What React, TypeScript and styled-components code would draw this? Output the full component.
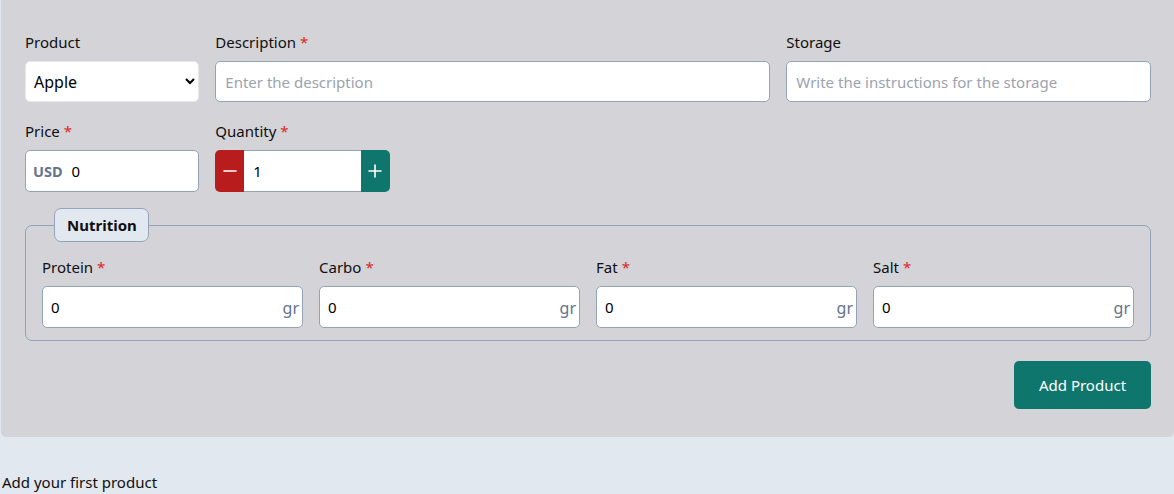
import React from "react";
import styled, { createGlobalStyle } from "styled-components";

const Global = createGlobalStyle`
  html, body { margin: 0; padding: 0; background: #e2e8f0; }
  body { font-family: "Noto Sans", "Open Sans", sans-serif; font-size: 15px; color: #0f0f0f; }
  * { box-sizing: border-box; }
`;

const Page = styled.div`
  padding: 0 0 0 1px;
`;

const Panel = styled.form`
  background: #d4d4d8;
  border-radius: 0 0 5px 5px;
  padding: 30px 23px 28px 24px;
  display: flex;
  flex-direction: column;
`;

const Grid = styled.div`
  display: grid;
  grid-template-columns: repeat(12, 1fr);
  column-gap: 16px;
  row-gap: 17px;
`;

const Field = styled.div<{ $span: number; $start?: number }>`
  grid-column: ${(p) => (p.$start ? `${p.$start} / ` : "")}span ${(p) => p.$span};
  display: flex;
  flex-direction: column;
  min-width: 0;
`;

const Label = styled.label`
  line-height: 24px;
  margin-bottom: 7px;
  font-size: 15px;
`;

const Req = styled.span`
  color: #dc2626;
  margin-left: 4px;
`;

const Select = styled.select`
  height: 41px;
  border: 1px solid #e5e7eb;
  border-radius: 5px;
  background: #fff;
  font: inherit;
  font-size: 16px;
  padding: 0 6px 0 4px;
  color: #000;
`;

const TextInput = styled.input`
  height: 41px;
  border: 1px solid #94a3b8;
  border-radius: 5px;
  background: #fff;
  font: inherit;
  padding: 0 9px;
  color: #000;
  &::placeholder { color: #9ca3af; }
`;

const Group = styled.div`
  height: 42px;
  display: flex;
  align-items: center;
  border: 1px solid #94a3b8;
  border-radius: 5px;
  background: #fff;
  overflow: hidden;
`;

const Addon = styled.span<{ $bold?: boolean }>`
  color: #64748b;
  font-weight: ${(p) => (p.$bold ? 700 : 400)};
  padding: ${(p) => (p.$bold ? "0 1px 0 7px" : "2px 3px 0 0")};
  font-size: ${(p) => (p.$bold ? "14.5px" : "16px")};
`;

const BareInput = styled.input`
  flex: 1;
  min-width: 0;
  border: none;
  outline: none;
  font: inherit;
  height: 100%;
  padding: 0 8px;
  background: transparent;
  color: #000;
`;

const Stepper = styled.div`
  height: 42px;
  display: flex;
  border-radius: 5px;
  overflow: hidden;
`;

const StepBtn = styled.button<{ $tone: "minus" | "plus" }>`
  width: 29px;
  border: none;
  background: ${(p) => (p.$tone === "minus" ? "#b91c1c" : "#0f766e")};
  display: flex;
  align-items: center;
  justify-content: center;
  padding: 0;
`;

const StepInput = styled.input`
  flex: 1;
  min-width: 0;
  border: 1px solid #94a3b8;
  border-left: none;
  border-right: none;
  font: inherit;
  padding: 0 9px;
  color: #000;
  background: #fff;
`;

const Fieldset = styled.fieldset`
  margin: 16px 0 0;
  min-width: 0;
  border: 1px solid #94a3b8;
  border-radius: 7px;
  padding: 13px 16px 12px;
  display: grid;
  grid-template-columns: repeat(4, minmax(0, 1fr));
  column-gap: 16px;
`;

const Legend = styled.legend`
  margin-left: 12px;
  padding: 5px 11px 5px 12px;
  border: 1px solid #94a3b8;
  border-radius: 7px;
  background: #e2e8f0;
  font-weight: 700;
  font-size: 15px;
  line-height: 22px;
`;

const NutField = styled.div`
  display: flex;
  flex-direction: column;
`;

const Actions = styled.div`
  display: flex;
  justify-content: flex-end;
  margin-top: 20px;
`;

const Submit = styled.button`
  width: 137px;
  height: 48px;
  border: none;
  border-radius: 5px;
  background: #0f766e;
  color: #fff;
  font: inherit;
  font-size: 15px;
`;

const Empty = styled.p`
  margin: 35px 0 0 1px;
  font-size: 15px;
  line-height: 20px;
`;

const Minus = () => (
  <svg width="14" height="14" viewBox="0 0 14 14">
    <path d="M1 7h12" stroke="#fff" strokeWidth="1.6" strokeLinecap="round" />
  </svg>
);
const Plus = () => (
  <svg width="14" height="14" viewBox="0 0 14 14">
    <path d="M1 7h12M7 1v12" stroke="#fff" strokeWidth="1.6" strokeLinecap="round" />
  </svg>
);

const nutrients = ["Protein", "Carbo", "Fat", "Salt"];

export default function App() {
  return (
    <Page>
      <Global />
      <Panel onSubmit={(e) => e.preventDefault()}>
        <Grid>
          <Field $span={2}>
            <Label>Product</Label>
            <Select defaultValue="Apple">
              <option>Apple</option>
              <option>Banana</option>
            </Select>
          </Field>
          <Field $span={6}>
            <Label>Description<Req>*</Req></Label>
            <TextInput placeholder="Enter the description" />
          </Field>
          <Field $span={4}>
            <Label>Storage</Label>
            <TextInput placeholder="Write the instructions for the storage" />
          </Field>
          <Field $span={2} $start={1}>
            <Label>Price<Req>*</Req></Label>
            <Group>
              <Addon $bold>USD</Addon>
              <BareInput defaultValue="0" />
            </Group>
          </Field>
          <Field $span={2}>
            <Label>Quantity<Req>*</Req></Label>
            <Stepper>
              <StepBtn type="button" $tone="minus"><Minus /></StepBtn>
              <StepInput defaultValue="1" />
              <StepBtn type="button" $tone="plus"><Plus /></StepBtn>
            </Stepper>
          </Field>
        </Grid>
        <Fieldset>
          <Legend>Nutrition</Legend>
          {nutrients.map((n) => (
            <NutField key={n}>
              <Label>{n}<Req>*</Req></Label>
              <Group>
                <BareInput defaultValue="0" />
                <Addon>gr</Addon>
              </Group>
            </NutField>
          ))}
        </Fieldset>
        <Actions>
          <Submit type="submit">Add Product</Submit>
        </Actions>
      </Panel>
      <Empty>Add your first product</Empty>
    </Page>
  );
}
